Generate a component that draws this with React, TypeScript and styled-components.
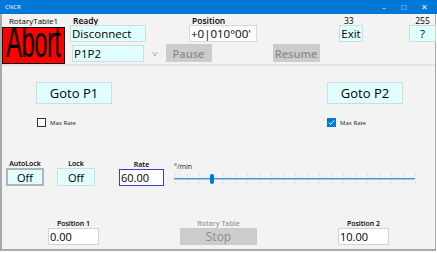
import { useState } from "react";
import styled, { createGlobalStyle } from "styled-components";

const GlobalStyle = createGlobalStyle`
  html, body {
    margin: 0;
    padding: 0;
    background: #ffffff;
  }
  * {
    box-sizing: border-box;
  }
  body {
    font-family: "Open Sans", "Noto Sans", sans-serif;
    color: #000000;
  }
`;

const Window = styled.div`
  width: 437px;
  height: 253px;
  display: flex;
  flex-direction: column;
  background: #ffffff;
  overflow: hidden;
`;

const TitleBar = styled.div`
  height: 14px;
  background: #0078d7;
  color: #ffffff;
  display: flex;
  align-items: center;
  padding: 0 3px 0 5px;
  font-size: 6px;
`;

const TitleText = styled.span`
  flex: 1;
`;

const WinButton = styled.span`
  width: 20px;
  text-align: center;
  font-size: 8px;
  line-height: 14px;
  color: #e6f1fb;
`;

const Frame = styled.div`
  width: 436px;
  height: 237px;
  background: #f3f3f3;
  border-left: 2px solid #a9a9a9;
  border-right: 1px solid #a9a9a9;
  border-bottom: 2px solid #a9a9a9;
  display: flex;
  flex-direction: column;
`;

const Header = styled.div`
  height: 52px;
  display: flex;
  border-bottom: 2px solid #e2e2e2;
`;

const AbortColumn = styled.div`
  width: 63px;
  display: flex;
  flex-direction: column;
  align-items: center;
`;

const AbortTitle = styled.div`
  font-size: 8px;
  line-height: 12px;
  padding-top: 1px;
  white-space: nowrap;
`;

const AbortButton = styled.div`
  width: 63px;
  height: 39px;
  background: #ff0000;
  border: 1px solid #000000;
  display: flex;
  align-items: center;
  justify-content: center;
  overflow: hidden;
`;

const AbortText = styled.span`
  font-family: "Liberation Sans", sans-serif;
  font-size: 45px;
  line-height: 37px;
  height: 37px;
  width: 57px;
  display: flex;
  justify-content: center;
  align-items: flex-start;
`;

const AbortInner = styled.span`
  display: inline-block;
  transform: scaleX(0.53);
  letter-spacing: -1px;
  margin-top: -4px;
`;

const HeaderRight = styled.div`
  flex: 1;
  display: flex;
  flex-direction: column;
`;

const HeaderRow = styled.div`
  display: flex;
  align-items: flex-end;
  height: 28px;
`;

const ControlRow = styled.div`
  display: flex;
  align-items: center;
  height: 22px;
`;

const Field = styled.div<{ $left: number; $align?: string }>`
  margin-left: ${({ $left }) => $left}px;
  display: flex;
  flex-direction: column;
  align-items: ${({ $align }) => $align ?? "flex-start"};
`;

const SmallLabel = styled.div<{ $pad?: number; $bold?: boolean }>`
  font-size: 8.5px;
  line-height: 9px;
  padding-left: ${({ $pad }) => $pad ?? 0}px;
  font-weight: ${({ $bold }) => ($bold ? 600 : 400)};
`;

const Box = styled.div<{ $w: number; $h?: number; $tone?: "cyan" | "white"; $size?: number; $center?: boolean }>`
  width: ${({ $w }) => $w}px;
  height: ${({ $h }) => $h ?? 17}px;
  background: ${({ $tone }) => ($tone === "white" ? "#ffffff" : "#e0ffff")};
  border: 1px solid #cfdcdc;
  font-size: ${({ $size }) => $size ?? 11}px;
  display: flex;
  align-items: center;
  justify-content: ${({ $center }) => ($center ? "center" : "flex-start")};
  padding-left: ${({ $center }) => ($center ? 0 : 1)}px;
  white-space: nowrap;
`;

const Chevron = styled.span`
  margin-left: 9px;
  color: #a8a8a8;
  font-size: 7px;
  transform: scaleX(1.5);
`;

const GrayButton = styled.div<{ $left: number; $w: number; $h?: number; $size?: number; $weight?: number }>`
  margin-left: ${({ $left }) => $left}px;
  width: ${({ $w }) => $w}px;
  height: ${({ $h }) => $h ?? 18}px;
  background: #cccccc;
  color: #8c8c8c;
  font-size: ${({ $size }) => $size ?? 11}px;
  font-weight: ${({ $weight }) => $weight ?? 600};
  display: flex;
  align-items: center;
  justify-content: center;
`;

const Body = styled.div`
  flex: 1;
  display: flex;
  flex-direction: column;
`;

const GotoRow = styled.div`
  display: flex;
  justify-content: space-between;
  padding: 16px 32px 0 34px;
`;

const GotoGroup = styled.div`
  display: flex;
  flex-direction: column;
  gap: 14px;
`;

const GotoButton = styled.div`
  width: 76px;
  height: 22px;
  background: #e0ffff;
  border: 1px solid #cfdcdc;
  font-size: 13px;
  font-weight: 500;
  display: flex;
  align-items: center;
  justify-content: center;
`;

const CheckRow = styled.label<{ $indent: number }>`
  display: flex;
  align-items: center;
  gap: 4px;
  padding-left: ${({ $indent }) => $indent}px;
  font-size: 6px;
  color: #222222;
`;

const CheckBox = styled.span<{ $checked: boolean }>`
  width: 9px;
  height: 9px;
  border: 1px solid ${({ $checked }) => ($checked ? "#0078d7" : "#333333")};
  background: ${({ $checked }) => ($checked ? "#0078d7" : "#ffffff")};
  display: flex;
  align-items: center;
  justify-content: center;
`;

const RateRow = styled.div`
  display: flex;
  align-items: flex-end;
  margin-top: 33px;
  padding-left: 4px;
`;

const LabeledCell = styled.div<{ $left: number }>`
  margin-left: ${({ $left }) => $left}px;
  display: flex;
  flex-direction: column;
  align-items: center;
`;

const TinyLabel = styled.div<{ $muted?: boolean }>`
  font-size: 7px;
  line-height: 8px;
  font-weight: 600;
  color: ${({ $muted }) => ($muted ? "#9a9a9a" : "#000000")};
`;

const ToggleBox = styled.div<{ $focus?: boolean }>`
  width: 38px;
  height: 18px;
  background: #e0ffff;
  border: ${({ $focus }) => ($focus ? "2px solid #b4b4b4" : "1px solid #cfdcdc")};
  font-size: 11px;
  font-weight: 500;
  display: flex;
  align-items: center;
  justify-content: center;
`;

const NumberInput = styled.input<{ $w: number; $focus?: boolean }>`
  width: ${({ $w }) => $w}px;
  height: 17px;
  border: 1px solid ${({ $focus }) => ($focus ? "#3c3ccf" : "#d2d2d2")};
  background: #ffffff;
  font-family: "Open Sans", "Noto Sans", sans-serif;
  font-size: 11px;
  padding: 0 0 0 1px;
  outline: none;
  color: #000000;
`;

const SliderBlock = styled.div`
  margin-left: 10px;
  display: flex;
  flex-direction: column;
  gap: 2px;
  padding-bottom: 1px;
`;

const UnitLabel = styled.div`
  font-size: 7px;
  line-height: 8px;
  color: #222222;
`;

const SliderSvg = styled.svg`
  display: block;
`;

const PositionRow = styled.div`
  display: flex;
  align-items: flex-end;
  margin-top: 34px;
`;

const ticks = Array.from({ length: 21 }, (_, i) => 1 + i * 12);

function App() {
  const [rate, setRate] = useState("60.00");
  const [p1, setP1] = useState("0.00");
  const [p2, setP2] = useState("10.00");

  return (
    <>
      <GlobalStyle />
      <Window>
        <TitleBar>
          <TitleText>CNCR</TitleText>
          <WinButton>–</WinButton>
          <WinButton>□</WinButton>
          <WinButton>✕</WinButton>
        </TitleBar>
        <Frame>
          <Header>
            <AbortColumn>
              <AbortTitle>RotaryTable1</AbortTitle>
              <AbortButton>
                <AbortText>
                  <AbortInner>Abort</AbortInner>
                </AbortText>
              </AbortButton>
            </AbortColumn>
            <HeaderRight>
              <HeaderRow>
                <Field $left={5}>
                  <SmallLabel $pad={3} $bold>Ready</SmallLabel>
                  <Box $w={76} $size={11.5}>Disconnect</Box>
                </Field>
                <Field $left={43}>
                  <SmallLabel $pad={3} $bold>Position</SmallLabel>
                  <Box $w={68} $tone="white" $size={11.5}>+0|010°00'</Box>
                </Field>
                <Field $left={82}>
                  <SmallLabel $pad={5}>33</SmallLabel>
                  <Box $w={24} $center $size={11.5}>Exit</Box>
                </Field>
                <Field $left={46} $align="center">
                  <SmallLabel>255</SmallLabel>
                  <Box $w={27} $center $size={11.5}>?</Box>
                </Field>
              </HeaderRow>
              <ControlRow>
                <Field $left={7}>
                  <Box $w={72} $size={11.5}>P1P2</Box>
                </Field>
                <Chevron>v</Chevron>
                <GrayButton $left={9} $w={46}>Pause</GrayButton>
                <GrayButton $left={61} $w={47}>Resume</GrayButton>
              </ControlRow>
            </HeaderRight>
          </Header>
          <Body>
            <GotoRow>
              <GotoGroup>
                <GotoButton>Goto P1</GotoButton>
                <CheckRow $indent={1}>
                  <CheckBox $checked={false} />
                  Max Rate
                </CheckRow>
              </GotoGroup>
              <GotoGroup>
                <GotoButton>Goto P2</GotoButton>
                <CheckRow $indent={0}>
                  <CheckBox $checked>
                    <svg width="7" height="7" viewBox="0 0 7 7">
                      <path d="M0.8 3.6 L2.7 5.4 L6.2 1.4" stroke="#ffffff" strokeWidth="1" fill="none" />
                    </svg>
                  </CheckBox>
                  Max Rate
                </CheckRow>
              </GotoGroup>
            </GotoRow>
            <RateRow>
              <LabeledCell $left={0}>
                <TinyLabel>AutoLock</TinyLabel>
                <ToggleBox $focus>Off</ToggleBox>
              </LabeledCell>
              <LabeledCell $left={13}>
                <TinyLabel>Lock</TinyLabel>
                <ToggleBox>Off</ToggleBox>
              </LabeledCell>
              <LabeledCell $left={24}>
                <TinyLabel>Rate</TinyLabel>
                <NumberInput $w={45} $focus value={rate} onChange={(e) => setRate(e.target.value)} />
              </LabeledCell>
              <SliderBlock>
                <UnitLabel>°/min</UnitLabel>
                <SliderSvg width="244" height="12" viewBox="0 0 244 12">
                  {ticks.map((x) => (
                    <g key={x}>
                      <rect x={x} y={1} width={1} height={1} fill="#c4c4c4" />
                      <rect x={x} y={9} width={1} height={1} fill="#c4c4c4" />
                    </g>
                  ))}
                  <rect x={0} y={5} width={241} height={1.5} fill="#4a95dc" />
                  <rect x={36} y={1} width={4} height={10} rx={2} fill="#0078d7" />
                </SliderSvg>
              </SliderBlock>
            </RateRow>
            <PositionRow>
              <LabeledCell $left={46}>
                <TinyLabel>Position 1</TinyLabel>
                <NumberInput $w={51} value={p1} onChange={(e) => setP1(e.target.value)} />
              </LabeledCell>
              <LabeledCell $left={81}>
                <TinyLabel $muted>Rotary Table</TinyLabel>
                <GrayButton $left={0} $w={77} $h={17} $size={12} $weight={500}>Stop</GrayButton>
              </LabeledCell>
              <LabeledCell $left={81}>
                <TinyLabel>Position 2</TinyLabel>
                <NumberInput $w={51} value={p2} onChange={(e) => setP2(e.target.value)} />
              </LabeledCell>
            </PositionRow>
          </Body>
        </Frame>
      </Window>
    </>
  );
}

export default App;
